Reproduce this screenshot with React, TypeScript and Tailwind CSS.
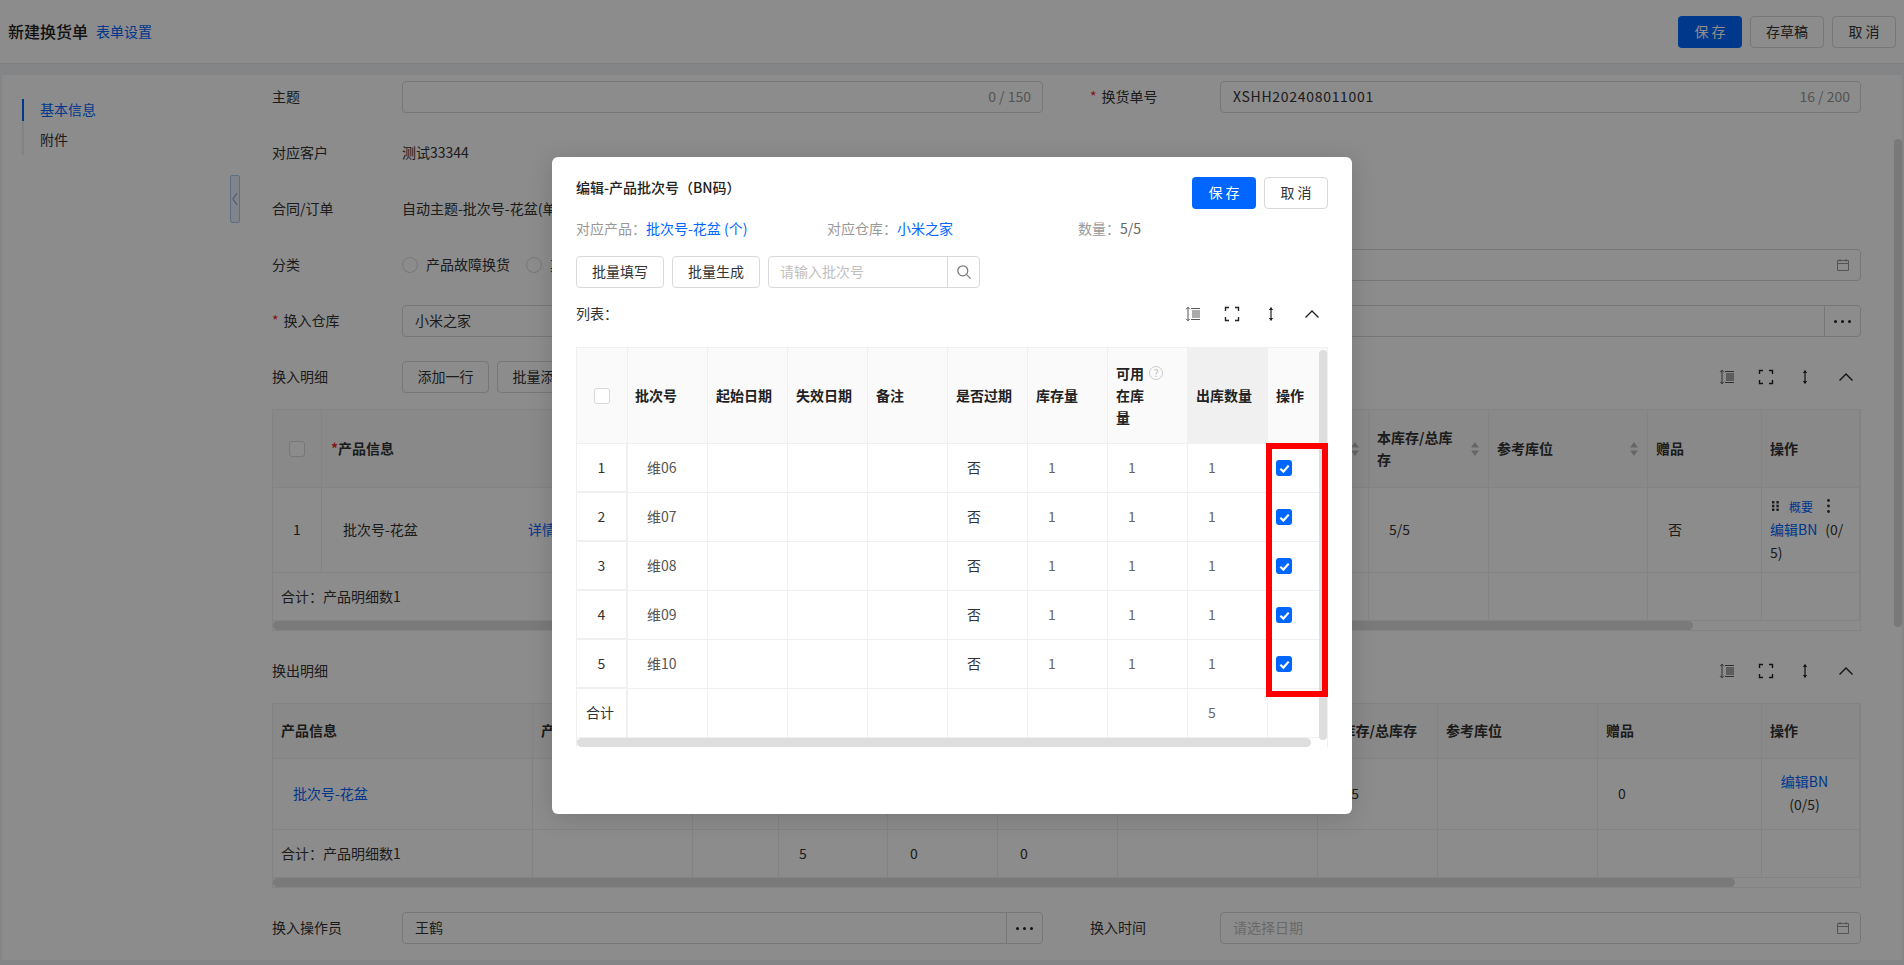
import React from "react";

const BLUE = "text-[#0066ff]";

function DensityIcon() {
  return (
    <svg width="16" height="16" viewBox="0 0 16 16" fill="none" stroke="currentColor" strokeWidth="1" className="text-[#555]">
      <path d="M3 1.5v13M1.2 3.2 3 1.2l1.8 2M1.2 12.8 3 14.8l1.8-2" />
      <path d="M6 2.5h9M7 5h8M7 7h8M7 9h8M7 11h8M6 13.5h9" />
    </svg>
  );
}
function FullIcon() {
  return (
    <svg width="16" height="16" viewBox="0 0 16 16" fill="none" stroke="#222" strokeWidth="1.4">
      <path d="M1.5 5V1.5H5M11 1.5h3.5V5M14.5 11v3.5H11M5 14.5H1.5V11" />
    </svg>
  );
}
function HeightIcon() {
  return (
    <svg width="16" height="16" viewBox="0 0 16 16" fill="none" stroke="#222" strokeWidth="1.2">
      <path d="M8 1.5v13" />
      <path d="M5.8 4 8 1.2 10.2 4zM5.8 12 8 14.8 10.2 12z" fill="#222" stroke="none" />
    </svg>
  );
}
function UpIcon() {
  return (
    <svg width="16" height="16" viewBox="0 0 16 16" fill="none" stroke="#222" strokeWidth="1.4">
      <path d="M1.5 11.5 8 5l6.5 6.5" />
    </svg>
  );
}
function CalIcon() {
  return (
    <svg width="14" height="14" viewBox="0 0 14 14" fill="none" stroke="#999" strokeWidth="1" className="-mr-[2px] mt-[2px]">
      <path d="M1.5 2.5h11v10h-11zM1.5 5.5h11M4 1v2.5M10 1v2.5" />
    </svg>
  );
}
function SortArrows() {
  return (
    <svg width="10" height="16" viewBox="0 0 10 16" fill="#bbb" className="mt-[2px] shrink-0">
      <path d="M5 1 9 6.5H1zM5 15 1 9.5h8z" />
    </svg>
  );
}
function Check() {
  return (
    <span className="mt-[2px] flex h-4 w-4 items-center justify-center rounded-[3px] bg-[#0066ff]">
      <svg width="11" height="11" viewBox="0 0 10 10" fill="none" stroke="#fff" strokeWidth="2">
        <path d="M1.2 5.2 4 7.8 8.8 2.4" />
      </svg>
    </span>
  );
}
function EmptyCheck() {
  return <span className="mt-[2px] block h-4 w-4 rounded-[3px] border border-[#d9d9d9] bg-white" />;
}
function Dots() {
  return (
    <span className="flex h-full w-9 items-center justify-center gap-[4px] border-l border-[#d9d9d9]">
      <i className="h-[3px] w-[3px] rounded-full bg-[#222]" />
      <i className="h-[3px] w-[3px] rounded-full bg-[#222]" />
      <i className="h-[3px] w-[3px] rounded-full bg-[#222]" />
    </span>
  );
}
function Toolbar() {
  return (
    <div className="flex items-center">
      <span className="flex w-[39px] justify-center"><DensityIcon /></span>
      <span className="flex w-[39px] justify-center"><FullIcon /></span>
      <span className="flex w-[40px] justify-center"><HeightIcon /></span>
      <span className="flex w-[41px] justify-center"><UpIcon /></span>
    </div>
  );
}
function Btn({ children, w, primary }: { children: React.ReactNode; w: string; primary?: boolean }) {
  return (
    <button
      className={
        "flex h-8 items-center justify-center rounded-[4px] pb-[2px] text-sm " +
        w +
        " " +
        (primary ? "bg-[#0066ff] text-white" : "border border-[#d9d9d9] bg-white text-[#333]")
      }
    >
      {children}
    </button>
  );
}
function Label({ children, req }: { children: React.ReactNode; req?: boolean }) {
  return (
    <div className="w-[130px] shrink-0 pb-[2px] text-sm text-[#333]">
      {req && <span className="mr-[5px] text-[#f5222d]">*</span>}
      {children}
    </div>
  );
}
function Box({ children }: { children?: React.ReactNode }) {
  return (
    <div className="flex h-8 flex-1 items-center justify-between rounded-[4px] border border-[#d9d9d9] bg-white px-3 pb-[2px] text-sm text-[#333]">
      {children}
    </div>
  );
}
function Half({ children }: { children: React.ReactNode }) {
  return <div className="flex h-8 w-[771px] items-center">{children}</div>;
}
function Row({ children }: { children: React.ReactNode }) {
  return <div className="flex justify-between">{children}</div>;
}
function C({ children, className = "" }: { children?: React.ReactNode; className?: string }) {
  return <div className={"flex min-w-0 items-center border-r border-b border-[#eeeeee] px-2 pb-[2px] text-sm " + className}>{children}</div>;
}
function HScroll({ w }: { w: string }) {
  return (
    <div className="h-[9px] bg-white">
      <div className={"h-[9px] rounded-full bg-[#dedede] " + w} />
    </div>
  );
}

function InTable() {
  const cols = "grid grid-cols-[49px_278px_769px_120px_159px_114px_98px]";
  const h = "bg-[#fafafa] font-bold";
  return (
    <div className="border border-[#eeeeee] bg-white text-[#333]">
      <div className={cols + " h-[78px]"}>
        <C className={h + " justify-center"}><EmptyCheck /></C>
        <C className={h + " pl-[9px]"}><span className="text-[#f5222d]">*</span>产品信息</C>
        <C className={h + " justify-end"}><SortArrows /></C>
        <C className={h + " justify-between"}><span className="w-[84px] leading-[22px]">本库存/总库存</span><SortArrows /></C>
        <C className={h + " justify-between"}>参考库位<SortArrows /></C>
        <C className={h}>赠品</C>
        <C className={h}>操作</C>
      </div>
      <div className={cols + " h-[85px]"}>
        <C className="justify-center">1</C>
        <C className="pl-[21px]"><span className="w-[185px] shrink-0">批次号-花盆</span><span className="shrink-0 text-[#0066ff]">详情</span></C>
        <C />
        <C className="pl-[20px]">5/5</C>
        <C />
        <C className="pl-[20px]">否</C>
        <C>
          <div className="leading-[23px]">
            <div className="flex items-center">
              <svg width="7" height="10" viewBox="0 0 7 10" fill="#333" className="ml-[2px] mr-[10px]">
                <path d="M0 0h2.4v2.4H0zM4.4 0h2.4v2.4H4.4zM0 3.8h2.4v2.4H0zM4.4 3.8h2.4v2.4H4.4zM0 7.6h2.4V10H0zM4.4 7.6h2.4V10H4.4z" />
              </svg>
              <span className="text-xs leading-[23px] text-[#0066ff]">概要</span>
              <svg width="3" height="14" viewBox="0 0 3 14" fill="#333" className="ml-[14px]">
                <circle cx="1.5" cy="1.5" r="1.4" />
                <circle cx="1.5" cy="7" r="1.4" />
                <circle cx="1.5" cy="12.5" r="1.4" />
              </svg>
            </div>
            <div><span className="text-[#0066ff]">编辑BN</span><span className="ml-[8px]">(0/</span></div>
            <div>5)</div>
          </div>
        </C>
      </div>
      <div className={cols + " h-[48px]"}>
        <C className="col-span-2 border-r-0">合计：产品明细数1</C>
        <C />
        <C />
        <C />
        <C />
        <C />
      </div>
      <HScroll w="w-[1420px]" />
    </div>
  );
}

function OutTable() {
  const cols = "grid grid-cols-[260px_160px_86px_109px_110px_120px_200px_120px_160px_164px_98px]";
  const h = "bg-[#fafafa] font-bold";
  return (
    <div className="border border-[#eeeeee] bg-white text-[#333]">
      <div className={cols + " h-[55px]"}>
        <C className={h}>产品信息</C>
        <C className={h}>产品编号</C>
        <C className={h} />
        <C className={h} />
        <C className={h} />
        <C className={h} />
        <C className={h} />
        <C className={h + " justify-end pr-[20px]"}>本库存/总库存</C>
        <C className={h}>参考库位</C>
        <C className={h}>赠品</C>
        <C className={h}>操作</C>
      </div>
      <div className={cols + " h-[71px]"}>
        <C className="pl-[20px] text-[#0066ff]">批次号-花盆</C>
        <C /><C /><C /><C /><C /><C />
        <C className="pl-[20px]">5/5</C>
        <C />
        <C className="pl-[20px]">0</C>
        <C className="flex-col justify-center pr-[20px] text-center leading-[23px]">
          <span className="text-[#0066ff]">编辑BN</span>
          <span>(0/5)</span>
        </C>
      </div>
      <div className={cols + " h-[48px]"}>
        <C>合计：产品明细数1</C>
        <C />
        <C />
        <C className="pl-[20px]">5</C>
        <C className="pl-[22px]">0</C>
        <C className="pl-[22px]">0</C>
        <C /><C /><C /><C /><C />
      </div>
      <HScroll w="w-[1462px]" />
    </div>
  );
}

function Modal() {
  const rows = ["维06", "维07", "维08", "维09", "维10"];
  const cols = "grid grid-cols-[51px_80px_80px_80px_80px_80px_80px_80px_80px_59px]";
  const h = "bg-[#fafafa] font-bold text-[#222]";
  const F = ({ children, className = "" }: { children?: React.ReactNode; className?: string }) => (
    <C className={"border-[#f0f0f0] " + className}>{children}</C>
  );
  return (
    <div className="absolute left-[552px] top-[157px] h-[657px] w-[800px] rounded-[6px] bg-white px-6 shadow-[0_4px_24px_rgba(0,0,0,0.15)]">
      <div className="flex items-center justify-between pt-5">
        <div className="pb-[12px] text-sm font-medium text-[#222]">编辑-产品批次号（BN码）</div>
        <div className="flex gap-2">
          <Btn w="w-16" primary>保 存</Btn>
          <Btn w="w-16">取 消</Btn>
        </div>
      </div>
      <div className="mt-[9px] flex h-[22px] items-center pb-[2px] text-sm">
        <div className="w-[251px] text-[#999]">对应产品：<span className={BLUE}>批次号-花盆 (个)</span></div>
        <div className="w-[251px] text-[#999]">对应仓库：<span className={BLUE}>小米之家</span></div>
        <div className="text-[#999]">数量：<span className="text-[#666]">5/5</span></div>
      </div>
      <div className="mt-4 flex h-8 gap-2">
        <Btn w="w-[88px]">批量填写</Btn>
        <Btn w="w-[88px]">批量生成</Btn>
        <div className="flex h-8 w-[212px] items-center rounded-[4px] border border-[#d9d9d9] text-sm">
          <span className="flex-1 pb-[2px] pl-[11px] text-[#bfbfbf]">请输入批次号</span>
          <span className="flex h-full w-8 items-center justify-center border-l border-[#d9d9d9]">
            <svg width="16" height="16" viewBox="0 0 16 16" fill="none" stroke="#777" strokeWidth="1.2">
              <circle cx="6.8" cy="6.8" r="5" />
              <path d="m10.6 10.6 4 4" />
            </svg>
          </span>
        </div>
      </div>
      <div className="mt-[15px] flex h-[22px] items-center justify-between text-sm text-[#333]">
        <span className="pb-[2px]">列表：</span>
        <div className="-mr-[4px]"><Toolbar /></div>
      </div>
      <div className="relative mt-[22px] h-[400px] border border-[#f0f0f0] text-[#333]">
        <div className={cols + " h-[96px]"}>
          <F className={h + " justify-center"}><EmptyCheck /></F>
          <F className={h + " pl-[7px]"}>批次号</F>
          <F className={h}>起始日期</F>
          <F className={h}>失效日期</F>
          <F className={h}>备注</F>
          <F className={h}>是否过期</F>
          <F className={h}>库存量</F>
          <F className={h}>
            <div className="leading-[22px]">
              <div className="flex items-center">
                可用
                <span className="ml-[5px] flex h-[14px] w-[14px] items-center justify-center rounded-full border border-[#ccc] text-[10px] font-normal leading-none text-[#bbb]">?</span>
              </div>
              <div>在库</div>
              <div>量</div>
            </div>
          </F>
          <F className="bg-[#f0f0f0] font-bold text-[#222]">出库数量</F>
          <F className={h + " border-r-0"}>操作</F>
        </div>
        {rows.map((r, i) => (
          <div key={r} className={cols + " h-[49px]"}>
            <F className="justify-center border-b-2 border-r-2">{i + 1}</F>
            <F className="pl-[19px] text-[#555]">{r}</F>
            <F /><F /><F />
            <F className="pl-[19px]">否</F>
            <F className="pl-[20px] text-[#666]">1</F>
            <F className="pl-[20px] text-[#666]">1</F>
            <F className="pl-[20px] text-[#666]">1</F>
            <F className="border-r-0 pl-[8px]"><Check /></F>
          </div>
        ))}
        <div className={cols + " h-[49px]"}>
          <F className="border-r-2 pl-[9px]">合计</F>
          <F /><F /><F /><F /><F /><F /><F />
          <F className="pl-[20px] text-[#666]">5</F>
          <F className="border-r-0" />
        </div>
        <HScroll w="w-[734px]" />
        <div className="absolute right-0 top-[2px] h-[390px] w-2 rounded-full bg-[#dedede]" />
        <div className="absolute left-[689px] top-[95px] h-[254px] w-[62px] border-[6px] border-[#ff0000]" />
      </div>
    </div>
  );
}

export default function App() {
  return (
    <div className="relative h-[965px] w-[1904px] overflow-hidden bg-[#f0f2f5] font-['Noto_Sans_CJK_SC','Noto_Sans',sans-serif] text-sm">
      <header className="flex h-16 items-center justify-between border-b border-[#e8e8e8] bg-white pl-2 pr-2">
        <div className="flex items-center pb-[2px]">
          <span className="text-base font-medium text-[#222]">新建换货单</span>
          <span className="ml-2 text-sm text-[#0066ff]">表单设置</span>
        </div>
        <div className="flex gap-2">
          <Btn w="w-16" primary>保 存</Btn>
          <Btn w="w-[74px]">存草稿</Btn>
          <Btn w="w-16">取 消</Btn>
        </div>
      </header>
      <div className="relative ml-[2px] mr-[2px] mt-[11px] flex h-[885px] bg-white">
        <aside className="relative w-[270px] shrink-0 pl-5 pt-6">
          <div className="border-l-2 border-[#eeeeee] pb-[4px]">
            <div className="-ml-[2px] flex h-[22px] items-center border-l-2 border-[#0066ff] pb-[2px] pl-4 text-[#0066ff]">基本信息</div>
            <div className="mt-[8px] flex h-[22px] items-center pb-[2px] pl-4 text-[#333]">附件</div>
          </div>
          <div className="absolute left-[228px] top-[100px] flex h-12 w-[10px] items-center justify-center rounded-[2px] border border-[#a9c8f5] bg-[#eaf2ff]">
            <svg width="6" height="14" viewBox="0 0 6 14" fill="none" stroke="#8fa6c8" strokeWidth="1.2">
              <path d="M5 1 1 7l4 6" />
            </svg>
          </div>
        </aside>
        <main className="flex flex-1 flex-col gap-6 pr-[41px] pt-[6px]">
          <Row>
            <Half><Label>主题</Label><Box><span /><span className="-mr-[1px] text-[#999]">0 / 150</span></Box></Half>
            <Half><Label req>换货单号</Label><Box><span className="tracking-[0.7px]">XSHH202408011001</span><span className="-mr-[2px] text-[#999]">16 / 200</span></Box></Half>
          </Row>
          <Row>
            <Half><Label>对应客户</Label><span className="pb-[2px] text-[#333]">测试33344</span></Half>
            <Half />
          </Row>
          <Row>
            <Half><Label>合同/订单</Label><span className="pb-[2px] text-[#333]">自动主题-批次号-花盆(单价1)</span></Half>
            <Half />
          </Row>
          <Row>
            <Half>
              <Label>分类</Label>
              <span className="h-4 w-4 rounded-full border border-[#d9d9d9]" />
              <span className="ml-2 pb-[2px] text-[#333]">产品故障换货</span>
              <span className="ml-[16px] h-4 w-4 rounded-full border border-[#d9d9d9]" />
              <span className="ml-2 pb-[2px] text-[#333]">其他</span>
            </Half>
            <Half><Label>换货日期</Label><Box><span /><CalIcon /></Box></Half>
          </Row>
          <Row>
            <Half><Label req>换入仓库</Label><Box>小米之家</Box></Half>
            <Half>
              <Label>换入位置</Label>
              <div className="flex h-8 flex-1 items-center justify-end rounded-[4px] border border-[#d9d9d9]">
                <Dots />
              </div>
            </Half>
          </Row>
          <div>
            <div className="flex h-8 items-center">
              <Label>换入明细</Label>
              <div className="flex gap-2">
                <Btn w="w-[87px]">添加一行</Btn>
                <Btn w="w-[87px]">批量添加</Btn>
              </div>
              <div className="-mr-[5px] ml-auto"><Toolbar /></div>
            </div>
            <div className="mt-4"><InTable /></div>
          </div>
          <div>
            <div className="flex h-8 items-center">
              <Label>换出明细</Label>
              <div className="-mr-[5px] ml-auto"><Toolbar /></div>
            </div>
            <div className="mt-4"><OutTable /></div>
          </div>
          <Row>
            <Half>
              <Label>换入操作员</Label>
              <div className="flex h-8 flex-1 items-center justify-between rounded-[4px] border border-[#d9d9d9] pl-3 text-[#333]">
                <span className="pb-[2px]">王鹤</span>
                <Dots />
              </div>
            </Half>
            <Half><Label>换入时间</Label><Box><span className="text-[#bfbfbf]">请选择日期</span><CalIcon /></Box></Half>
          </Row>
        </main>
        <div className="absolute right-0 top-[64px] h-[488px] w-2 rounded-full bg-[#dcdcdc]" />
      </div>
      <div className="absolute inset-0 bg-black/45" />
      <Modal />
    </div>
  );
}
